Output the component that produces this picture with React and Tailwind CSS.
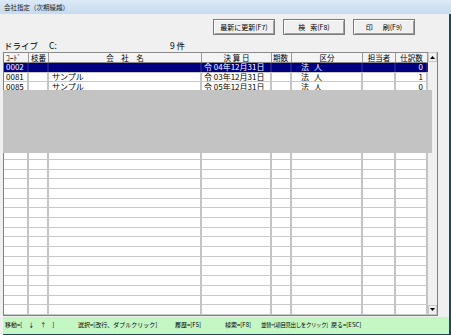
import React from "react";

const cols = [
  { key: "code", w: "w-[25px]", label: "ｺｰﾄﾞ", head: "justify-start pl-[2px]", cell: "justify-start pl-[2px]" },
  { key: "eda", w: "w-[20px]", label: "枝番", head: "justify-start pl-[2px]", cell: "justify-start pl-[2px]" },
  { key: "name", w: "w-[153px]", label: "会　社　名", head: "justify-center", cell: "justify-start pl-[3px]" },
  { key: "date", w: "w-[70px]", label: "決 算 日", head: "justify-center", cell: "justify-start pl-[2px]" },
  { key: "ki", w: "w-[20px]", label: "期数", head: "justify-start pl-[1px]", cell: "justify-start" },
  { key: "kubun", w: "w-[71px]", label: "区分", head: "justify-center", cell: "justify-start pl-[9px]" },
  { key: "tanto", w: "w-[33px]", label: "担当者", head: "justify-center", cell: "justify-start" },
  { key: "count", w: "w-[32px]", label: "仕訳数", head: "justify-center", cell: "justify-end pr-[3px]" },
];

const data = [
  { code: "0002", eda: "", name: "", date: "令 04年12月31日", ki: "", kubun: true, tanto: "", count: "0" },
  { code: "0081", eda: "", name: "サンプル", date: "令 03年12月31日", ki: "", kubun: true, tanto: "", count: "1" },
  { code: "0085", eda: "", name: "サンプル", date: "令 05年12月31日", ki: "", kubun: true, tanto: "", count: "0" },
];

const rows = [...data, ...Array.from({ length: 23 }, () => null)];

function Button({ children }) {
  return (
    <button className="w-[62px] h-[16px] bg-[#f0f0f0] border border-[#7a7a7a] shadow-[inset_1px_1px_0_#ffffff,inset_-1px_-1px_0_#a0a0a0] flex items-center justify-center text-[7px] leading-none text-black">
      {children}
    </button>
  );
}

function Arrow({ up }) {
  return (
    <div className="h-[10px] w-[9px] bg-[#f0f0f0] border border-[#c8c8c8] flex items-center justify-center">
      <svg width="5" height="3" viewBox="0 0 5 3">
        {up ? <polygon points="0,3 5,3 2.5,0" fill="#000" /> : <polygon points="0,0 5,0 2.5,3" fill="#000" />}
      </svg>
    </div>
  );
}

export default function App() {
  return (
    <div className="relative w-[451px] h-[335px] bg-[#f0f0f0] flex flex-col overflow-hidden font-['Noto_Sans_CJK_JP',sans-serif] text-black">
      <div className="h-[14px] shrink-0 bg-gradient-to-b from-[#dce9f7] to-[#c6daef] flex items-center pl-[4px] text-[6.5px] leading-none text-[#222]">
        会社指定（次期繰越）
      </div>

      <div className="flex-1 flex flex-col border-r-2 border-[#1d4a5a]">
        <div className="flex justify-end gap-[8px] pr-[34px] mt-[5px]">
          <Button>最新に更新(F7)</Button>
          <Button>
            <span>検</span>
            <span className="ml-[5px]">索(F8)</span>
          </Button>
          <Button>
            <span>印</span>
            <span className="ml-[10px]">刷(F9)</span>
          </Button>
        </div>

        <div className="h-[17px] flex items-center text-[8.5px] leading-none pl-[4px] pt-[4px]">
          <span className="w-[45px]">ドライブ</span>
          <span className="w-[121px]">C:</span>
          <span>9 件</span>
        </div>

        <div className="ml-[3px] w-[435px] flex border-l border-r border-b border-[#808080]">
          <div className="flex flex-col">
            <div className="h-[11px] flex bg-[#f4f4f4] border-t border-b border-[#8a8a8a]">
              {cols.map((c) => (
                <div key={c.key} className={`${c.w} h-full flex items-center ${c.head} border-r border-[#9a9a9a] text-[7.5px] leading-[8px] whitespace-nowrap`}>
                  {c.label}
                </div>
              ))}
            </div>
            {rows.map((r, i) => {
              const sel = i === 0;
              return (
                <div key={i} className={`h-[9.7px] flex ${sel ? "bg-[#000080] text-white" : "bg-white"} border-b border-[#c8c8c8]`}>
                  {cols.map((c) => (
                    <div key={c.key} className={`${c.w} h-full flex items-center ${c.cell} border-r-2 ${sel ? "border-[#1c1c8c]" : "border-[#c4c4c4]"} text-[8px] leading-[8px] whitespace-nowrap`}>
                      {r && c.key === "kubun" ? (
                        <>
                          <span>法</span>
                          <span className="ml-[5px]">人</span>
                        </>
                      ) : (
                        r && r[c.key]
                      )}
                    </div>
                  ))}
                </div>
              );
            })}
          </div>
          <div className="w-[9px] flex flex-col justify-between bg-[#f0f0f0]">
            <Arrow up />
            <Arrow />
          </div>
        </div>

        <div className="mt-[1px] ml-[3px] flex-1 bg-[#c4f7c4] border-b border-[#1d4a5a] flex items-center text-[6px] leading-[8px] whitespace-nowrap pl-[2px]">
          <span className="w-[73px] shrink-0">移動=[　↓　↑　]</span>
          <span className="w-[97px] shrink-0">選択=[改行、ダブルクリック]</span>
          <span className="w-[50px] shrink-0">履歴=[F5]</span>
          <span className="w-[36px] shrink-0">検索=[F8]</span>
          <span className="w-[70px] shrink-0 text-[5.5px] tracking-[-0.4px]">並替=[項目見出しをクリック]</span>
          <span className="shrink-0">戻る=[ESC]</span>
        </div>
      </div>

      <div className="absolute left-[3px] top-[90px] w-[429px] h-[63px] bg-[#c3c3c3]" />
    </div>
  );
}
